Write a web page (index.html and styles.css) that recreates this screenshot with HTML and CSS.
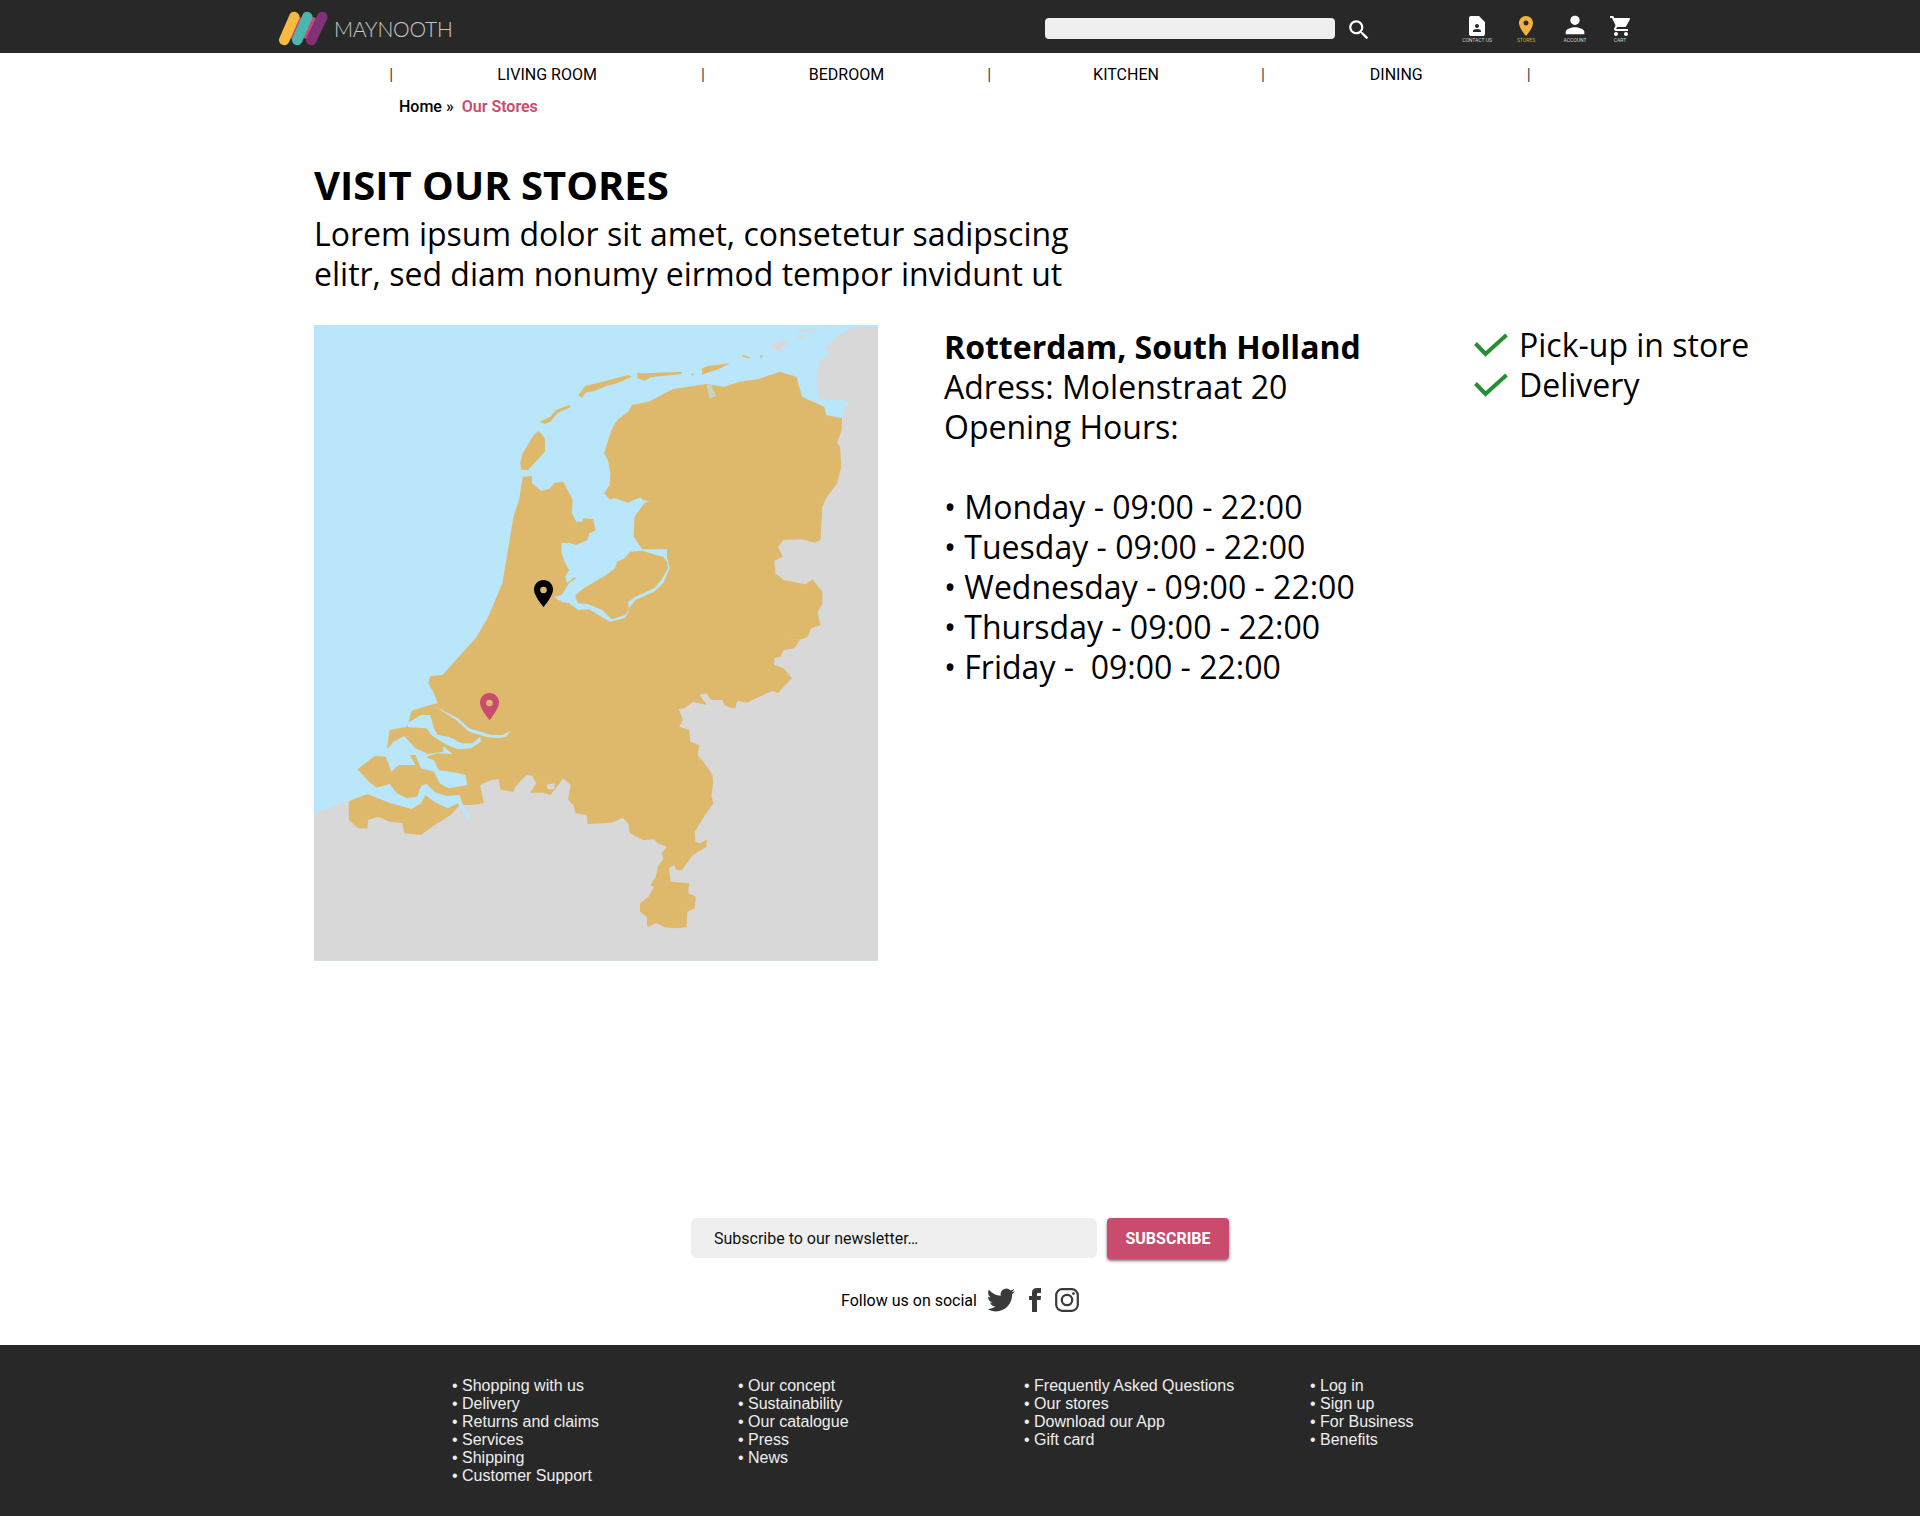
FILE: index.html
```html
<!DOCTYPE html>
<html lang="en">
<head>
  <meta charset="UTF-8">
  <title>Maynooth - Our Stores</title>
  <link rel="stylesheet" href="styles.css">
</head>
<body>
  <header class="topbar">
    <a class="brand" href="#">
      <svg class="brand-mark" viewBox="0 0 54 38">
        <g fill="none" stroke-linecap="round" stroke-width="10.5" transform="translate(-1.75 -1)">
          <path d="M16 25 L21 13" stroke="#c94b6d"/>
          <path d="M30 25 L35 13" stroke="#c94b6d"/>
          <path d="M7 31 L17 8" stroke="#f6b942"/>
          <path d="M20 31 L30 8" stroke="#4cb5ae"/>
          <path d="M34 31 L45 8" stroke="#83307a"/>
        </g>
      </svg>
      <span class="brand-name">MAYNOOTH</span>
    </a>
    <input class="search-input" type="text" aria-label="Search">
    <svg class="search-icon" viewBox="0 0 24 24"><path d="M15.5 14h-.79l-.28-.27C15.41 12.59 16 11.11 16 9.5 16 5.91 13.09 3 9.5 3S3 5.91 3 9.5 5.91 16 9.5 16c1.61 0 3.09-.59 4.23-1.57l.27.28v.79l5 4.99L20.49 19l-4.99-5zm-6 0C7.01 14 5 11.99 5 9.5S7.01 5 9.5 5 14 7.01 14 9.5 11.99 14 9.5 14z"/></svg>
    <nav class="tools">
      <a class="tool" href="#">
        <svg viewBox="0 0 24 24"><path d="M14 2H6c-1.1 0-2 .9-2 2v16c0 1.1.9 2 2 2h12c1.1 0 2-.9 2-2V8l-6-6zm-2 8c1.1 0 2 .9 2 2s-.9 2-2 2-2-.9-2-2 .9-2 2-2zm4 8H8v-.57c0-.81.48-1.53 1.22-1.85.85-.37 1.79-.58 2.78-.58.99 0 1.93.21 2.78.58.74.32 1.22 1.04 1.22 1.85V18z"/></svg>
        <span>CONTACT US</span>
      </a>
      <a class="tool tool-active" href="#">
        <svg viewBox="0 0 24 24"><path d="M12 2C8.13 2 5 5.13 5 9c0 5.25 7 13 7 13s7-7.75 7-13c0-3.87-3.13-7-7-7zm0 9.5c-1.38 0-2.5-1.12-2.5-2.5s1.12-2.5 2.5-2.5 2.5 1.12 2.5 2.5-1.12 2.5-2.5 2.5z"/></svg>
        <span>STORES</span>
      </a>
      <a class="tool tool-account" href="#">
        <svg viewBox="0 0 24 24"><path d="M12 12c2.21 0 4-1.79 4-4s-1.79-4-4-4-4 1.79-4 4 1.79 4 4 4zm0 2c-2.67 0-8 1.34-8 4v2h16v-2c0-2.66-5.33-4-8-4z"/></svg>
        <span>ACCOUNT</span>
      </a>
      <a class="tool tool-cart" href="#">
        <svg viewBox="0 0 24 24"><path d="M7 18c-1.1 0-1.99.9-1.99 2S5.9 22 7 22s2-.9 2-2-.9-2-2-2zM1 2v2h2l3.6 7.59-1.35 2.45c-.16.28-.25.61-.25.96 0 1.1.9 2 2 2h12v-2H7.42c-.14 0-.25-.11-.25-.25l.03-.12.9-1.63h7.45c.75 0 1.41-.41 1.75-1.03l3.58-6.49c.08-.14.12-.31.12-.48 0-.55-.45-1-1-1H5.21l-.94-2H1zm16 16c-1.1 0-1.99.9-1.99 2s.89 2 1.99 2 2-.9 2-2-.9-2-2-2z"/></svg>
        <span>CART</span>
      </a>
    </nav>
  </header>

  <nav class="menu">
    <span>|</span>
    <a class="menu-living" href="#">LIVING ROOM</a>
    <span>|</span>
    <a class="menu-bedroom" href="#">BEDROOM</a>
    <span>|</span>
    <a class="menu-kitchen" href="#">KITCHEN</a>
    <span>|</span>
    <a class="menu-dining" href="#">DINING</a>
    <span>|</span>
  </nav>

  <div class="crumbs">
    <a href="#">Home</a> <span class="crumb-sep">»</span> <span class="crumb-here">Our Stores</span>
  </div>

  <main class="page">
    <h1>VISIT OUR STORES</h1>
    <p class="lead">Lorem ipsum dolor sit amet, consetetur sadipscing<br>elitr, sed diam nonumy eirmod tempor invidunt ut</p>

    <section class="store">
      <svg class="map" viewBox="314 325 564 636">
        <rect x="314" y="325" width="564" height="636" fill="#b9e6fb"/>

        <!-- north half, points read off at 2.703 x 3 -->
        <g transform="translate(310 320) scale(0.36995 0.33333)">
          <path class="grey" d="M1536 20 L1470 22 1430 45 1392 85 1405 105 1378 120 1368 190 1378 238 1440 240 1488 258 1460 250 1445 260 1438 295 1200 500 1200 965 1536 965Z"/>
          <path class="grey" d="M1245 75 L1280 60 1298 72 1275 80 1278 95 1250 88Z M1320 30 L1390 22 1340 35 1320 35Z M1320 45 L1335 45 1330 58 1318 55Z"/>
          <path class="land" d="M445 965 L445 960 480 895 520 790 550 590 565 540 575 470 600 468 600 490 625 513 650 505 660 488 685 485 710 540 708 580 720 605 735 605 740 595 765 597 772 630 755 640 750 660 720 675 700 668 680 670 680 700 690 730 700 750 690 770 695 790 715 772 720 775 700 790 680 825 660 832 680 845 700 850 725 870 755 868 780 885 810 905 850 895 860 880 865 860 880 840 930 815 955 790 972 745 965 710 965 688 898 688 875 650 877 590 905 548 918 545 900 540 893 532 875 540 860 548 825 535 810 538 795 520 810 495 812 460 805 420 795 400 800 380 815 330 830 300 860 275 870 255 915 245 980 208 1070 192 1120 200 1160 185 1210 178 1270 155 1315 170 1330 230 1390 260 1395 285 1438 295 1437 330 1425 370 1433 380 1436 440 1425 490 1395 535 1385 560 1380 660 1365 668 1330 658 1280 660 1265 680 1278 710 1255 722 1258 760 1280 780 1340 793 1358 778 1385 815 1385 850 1372 880 1380 915 1355 925 1345 950 1325 960 1325 965Z"/>
          <path class="land" d="M718 825 L740 805 800 765 825 745 830 725 850 715 865 695 898 692 935 705 955 710 965 725 968 745 950 780 930 805 880 830 860 845 862 870 852 885 815 898 790 870 750 852 725 850 718 835Z"/>
          <path class="land" d="M618 333 L635 355 635 395 610 425 590 450 572 450 568 430 575 400 605 345Z M620 305 L650 290 665 270 700 255 705 262 670 278 650 305 635 312Z M725 225 L745 197 775 190 860 165 870 170 830 190 800 198 770 212 745 218 735 233Z M885 158 L900 160 1005 155 1005 162 920 172 905 182 885 175Z M1060 145 L1075 138 1135 130 1105 148 1070 160 1060 165Z M1030 162 L1038 160 1035 168Z M1168 105 L1190 112 1185 115 1168 110Z M1215 108 L1225 105 1220 115Z"/>
          <path class="sea sea-faint" d="M1072 195 L1084 194 1098 228 1080 236Z"/>
        </g>

        <!-- south half -->
        <g transform="translate(310 640) scale(0.36995 0.33333)">
          <path class="grey" d="M0 525 L105 482 400 480 500 400 700 300 1000 100 1300 -2 1536 -2 1536 965 0 965Z"/>
          <path class="land" d="M445 -2 L358 105 325 108 320 130 335 160 345 190 325 195 275 212 262 260 215 270 212 295 205 350 175 348 128 388 155 462 105 480 105 540 130 565 155 565 157 540 185 530 215 545 250 550 255 580 300 585 330 560 380 525 405 495 440 495 470 490 460 435 490 420 510 418 515 450 550 455 555 440 585 405 600 407 612 430 595 458 630 458 650 465 675 430 683 415 705 435 697 478 712 495 718 520 748 525 750 552 790 550 815 548 845 533 860 550 865 580 900 600 930 598 940 610 965 620 950 640 955 655 940 680 935 710 920 735 930 740 915 770 892 790 892 815 910 830 912 862 935 850 960 862 985 865 1018 862 1020 815 1040 805 1043 770 1022 760 1025 730 975 725 970 685 985 675 990 690 1005 690 1035 645 1072 620 1073 598 1055 610 1042 605 1040 575 1065 530 1090 490 1085 465 1090 430 1088 405 1070 375 1048 345 1052 315 1028 305 1025 270 998 260 1008 240 997 208 1015 203 1035 185 1073 195 1053 165 1070 160 1085 180 1115 180 1120 195 1140 205 1150 205 1155 182 1180 188 1215 170 1250 153 1265 160 1285 135 1303 115 1280 85 1255 75 1255 55 1272 50 1280 30 1310 25 1325 -2Z"/>
          <path class="grey" d="M640 434 L662 430 660 448 642 448Z"/>
          <path class="sea" d="M100 485 L155 462 218 490 275 507 300 490 312 465 340 488 372 505 400 490 412 515 432 547 435 535 410 485 405 465 370 468 340 458 315 432 300 437 290 470 262 475 235 460 215 432 180 443 160 425 128 388Z"/>
          <path class="sea" d="M190 340 L215 320 225 305 255 288 285 325 315 340 318 355 335 360 348 390 395 398 420 405 425 435 375 445 350 430 335 395 300 385 285 345 270 345 285 375 240 375 220 395 205 350Z"/>
          <path class="sea" d="M262 250 L300 225 325 225 335 265 345 285 375 290 410 310 440 310 460 290 462 305 435 325 400 328 370 315 330 287 315 265 265 262Z"/>
          <path class="sea" d="M330 195 L400 235 430 265 490 285 520 285 543 272 530 290 510 295 480 292 430 275 395 240 345 205Z"/>
          <path class="sea" d="M360 318 L385 342 345 340 315 350 318 342 360 335Z"/>
        </g>

        <rect x="314" y="960" width="564" height="1" fill="#d3e0e6"/>

        <path class="pin-black" d="M543.5 580c-5.3 0-9.5 4.2-9.5 9.5 0 6.8 9.5 17.5 9.5 17.5s9.5-10.700 9.500-17.500c0-5.300-4.200-9.500-9.500-9.500z"/>
        <circle class="pin-hole" cx="543.500" cy="590" r="3.300"/>
        <path class="pin-red" d="M489.500 693c-5.300 0-9.500 4.200-9.500 9.500 0 6.800 9.500 17.500 9.500 17.500s9.500-10.700 9.500-17.500c0-5.300-4.200-9.500-9.500-9.500z"/>
        <circle class="pin-hole" cx="489.500" cy="703" r="3.300"/>
      </svg>

      <div class="details">
        <h2>Rotterdam, South Holland</h2>
        <p>Adress: Molenstraat 20</p>
        <p class="hours-title">Opening Hours:</p>
        <p>• Monday - 09:00 - 22:00</p>
        <p>• Tuesday - 09:00 - 22:00</p>
        <p>• Wednesday - 09:00 - 22:00</p>
        <p>• Thursday - 09:00 - 22:00</p>
        <p>• Friday - &nbsp;09:00 - 22:00</p>
      </div>

      <ul class="perks">
        <li>
          <svg viewBox="0 0 34 24"><path d="M1.500 10.500 L11.500 21 L32.500 2"/></svg>
          Pick-up in store
        </li>
        <li>
          <svg viewBox="0 0 34 24"><path d="M1.500 10.500 L11.500 21 L32.500 2"/></svg>
          Delivery
        </li>
      </ul>
    </section>
  </main>

  <section class="newsletter">
    <input class="news-input" type="text" placeholder="Subscribe to our newsletter…">
    <button class="news-button">SUBSCRIBE</button>
  </section>

  <div class="social">
    <span>Follow us on social</span>
    <svg class="social-twitter" viewBox="0 0 24 24"><path d="M23.950 4.570a10 10 0 0 1-2.820.770 4.960 4.960 0 0 0 2.160-2.720c-.950.550-2 .950-3.120 1.180a4.920 4.920 0 0 0-8.380 4.480C7.690 8.100 4.070 6.130 1.640 3.160a4.900 4.900 0 0 0-.670 2.480c0 1.710.870 3.210 2.190 4.100a4.900 4.900 0 0 1-2.230-.620v.060a4.920 4.920 0 0 0 3.950 4.830 4.900 4.900 0 0 1-2.210.080 4.940 4.940 0 0 0 4.600 3.420A9.870 9.870 0 0 1 0 19.540a13.940 13.940 0 0 0 7.550 2.210c9.050 0 14-7.500 14-13.980 0-.210 0-.420-.020-.630a9.940 9.940 0 0 0 2.460-2.550z"/></svg>
    <svg class="social-facebook" viewBox="4 0 16 24"><path d="M9 8H6v4h3v12h5V12h3.640L18 8h-4V6.330C14 5.370 14.190 5 15.120 5H18V0h-3.810C10.600 0 9 1.580 9 4.610V8z"/></svg>
    <svg class="social-instagram" viewBox="0 0 24 24">
      <rect x="1.200" y="1.200" width="21.600" height="21.600" rx="6" fill="none" stroke="#3a3a3a" stroke-width="2.200"/>
      <circle cx="12" cy="12" r="5.200" fill="none" stroke="#3a3a3a" stroke-width="2.200"/>
      <circle cx="18.400" cy="5.600" r="1.400"/>
    </svg>
  </div>

  <footer class="footer">
    <ul>
      <li>• Shopping with us</li>
      <li>• Delivery</li>
      <li>• Returns and claims</li>
      <li>• Services</li>
      <li>• Shipping</li>
      <li>• Customer Support</li>
    </ul>
    <ul>
      <li>• Our concept</li>
      <li>• Sustainability</li>
      <li>• Our catalogue</li>
      <li>• Press</li>
      <li>• News</li>
    </ul>
    <ul>
      <li>• Frequently Asked Questions</li>
      <li>• Our stores</li>
      <li>• Download our App</li>
      <li>• Gift card</li>
    </ul>
    <ul>
      <li>• Log in</li>
      <li>• Sign up</li>
      <li>• For Business</li>
      <li>• Benefits</li>
    </ul>
  </footer>
</body>
</html>
```

FILE: styles.css
```css
body {
  margin: 0;
  font-family: 'Roboto', sans-serif;
  font-size: 16px;
  color: #000;
  background: #fff;
}

a {
  color: inherit;
  text-decoration: none;
}

ul {
  list-style: none;
  margin: 0;
  padding: 0;
}

/* top bar */
.topbar {
  box-sizing: border-box;
  display: flex;
  align-items: center;
  height: 53px;
  padding: 4px 0 0 279px;
  background: #282828;
}

.brand {
  display: flex;
  align-items: center;
  width: 766px;
}

.brand-mark {
  width: 54px;
  height: 38px;
}

.brand-name {
  margin-left: 1px;
  font-family: 'Lato', sans-serif;
  font-size: 21px;
  font-weight: 300;
  letter-spacing: -0.2px;
  color: #c8c8c8;
}

.search-input {
  box-sizing: border-box;
  width: 290px;
  height: 21px;
  border: none;
  border-radius: 4px;
  background: #efefef;
}

.search-icon {
  width: 26px;
  height: 26px;
  margin: 3px 0 0 11px;
  fill: #fff;
}

.tools {
  display: flex;
  margin-left: 90px;
}

.tool {
  display: flex;
  flex-direction: column;
  align-items: center;
  width: 30px;
  margin-right: 19px;
  font-size: 5px;
  color: #d0d0d0;
}

.tool svg {
  width: 24px;
  height: 24px;
  fill: #fff;
  margin-bottom: -1px;
}

.tool-active {
  color: #d5a23f;
}

.tool-active svg {
  fill: #f5b03f;
}

.tool-account {
  margin-right: 15px;
}

.tool-account svg {
  width: 28px;
  height: 28px;
  margin: -3px 0 -2px;
}

.tool-cart svg {
  margin-left: 1px;
}

/* menu */
.menu {
  display: flex;
  justify-content: center;
  height: 42px;
  line-height: 43px;
}

.menu .menu-living {
  padding: 0 104px;
}

.menu .menu-bedroom {
  padding: 0 103px 0 104px;
}

.menu .menu-kitchen {
  padding: 0 102px;
}

.menu .menu-dining {
  padding: 0 104px 0 105px;
}

.menu span {
  color: #444;
}

.crumbs {
  padding-left: 399px;
  line-height: 24px;
  font-weight: 500;
}

.crumb-sep {
  margin-right: 4px;
}

.crumb-here {
  color: #c94b6d;
  font-weight: 600;
}

/* store block */
.page {
  padding-left: 314px;
}

h1 {
  margin: 46px 0 0;
  font-family: 'Open Sans', sans-serif;
  font-size: 40px;
  line-height: 40px;
  font-weight: 700;
}

.lead {
  margin: 9px 0 0;
  font-family: 'Open Sans', sans-serif;
  font-size: 32px;
  line-height: 40px;
}

.store {
  display: flex;
  margin-top: 31px;
}

.map {
  display: block;
  width: 564px;
  height: 636px;
  flex: none;
}

.grey { fill: #d8d8d8; }
.land { fill: #deb96c; }
.sea { fill: #b9e6fb; }
.sea-faint { opacity: 0.6; }
.pin-black { fill: #000; }
.pin-red { fill: #c94b6d; }
.pin-hole { fill: #deb96c; }

.details {
  width: 530px;
  margin-left: 66px;
  padding-top: 2px;
  font-family: 'Open Sans', sans-serif;
  font-size: 32px;
  line-height: 40px;
}

.details h2 {
  margin: 0;
  font-size: 32px;
  font-weight: 700;
}

.details p {
  margin: 0;
}

.details .hours-title {
  margin-bottom: 40px;
}

.perks {
  font-family: 'Open Sans', sans-serif;
  font-size: 32px;
  line-height: 40px;
}

.perks li {
  display: flex;
  align-items: center;
  gap: 11px;
}

.perks svg {
  width: 34px;
  height: 24px;
  fill: none;
  stroke: #259030;
  stroke-width: 4;
}

/* newsletter */
.newsletter {
  display: flex;
  justify-content: center;
  gap: 10px;
  margin-top: 257px;
}

.news-input {
  box-sizing: border-box;
  width: 406px;
  height: 40px;
  padding: 0 23px;
  border: none;
  border-radius: 6px;
  background: #efefef;
  font-family: 'Roboto', sans-serif;
  font-size: 16px;
}

.news-input::placeholder {
  color: #111;
  opacity: 1;
}

.news-button {
  width: 122px;
  height: 41px;
  border: none;
  border-radius: 4px;
  background: #c94b6d;
  color: #fff;
  font-family: 'Roboto', sans-serif;
  font-size: 16px;
  font-weight: 700;
  box-shadow: 0 2px 3px rgba(0, 0, 0, 0.55);
}

.social {
  display: flex;
  justify-content: center;
  align-items: center;
  height: 26px;
  margin-top: 28px;
}

.social svg {
  fill: #3a3a3a;
}

.social-twitter {
  width: 28px;
  height: 28px;
  margin-left: 10px;
}

.social-facebook {
  width: 16px;
  height: 24px;
  margin-left: 12px;
}

.social-instagram {
  width: 24px;
  height: 24px;
  margin-left: 12px;
}

/* footer */
.footer {
  display: grid;
  grid-template-columns: repeat(4, 286px);
  margin-top: 32px;
  padding: 32px 0 31px 452px;
  background: #282828;
  font-family: 'Liberation Sans', sans-serif;
  line-height: 18px;
  color: #eee;
}
```
